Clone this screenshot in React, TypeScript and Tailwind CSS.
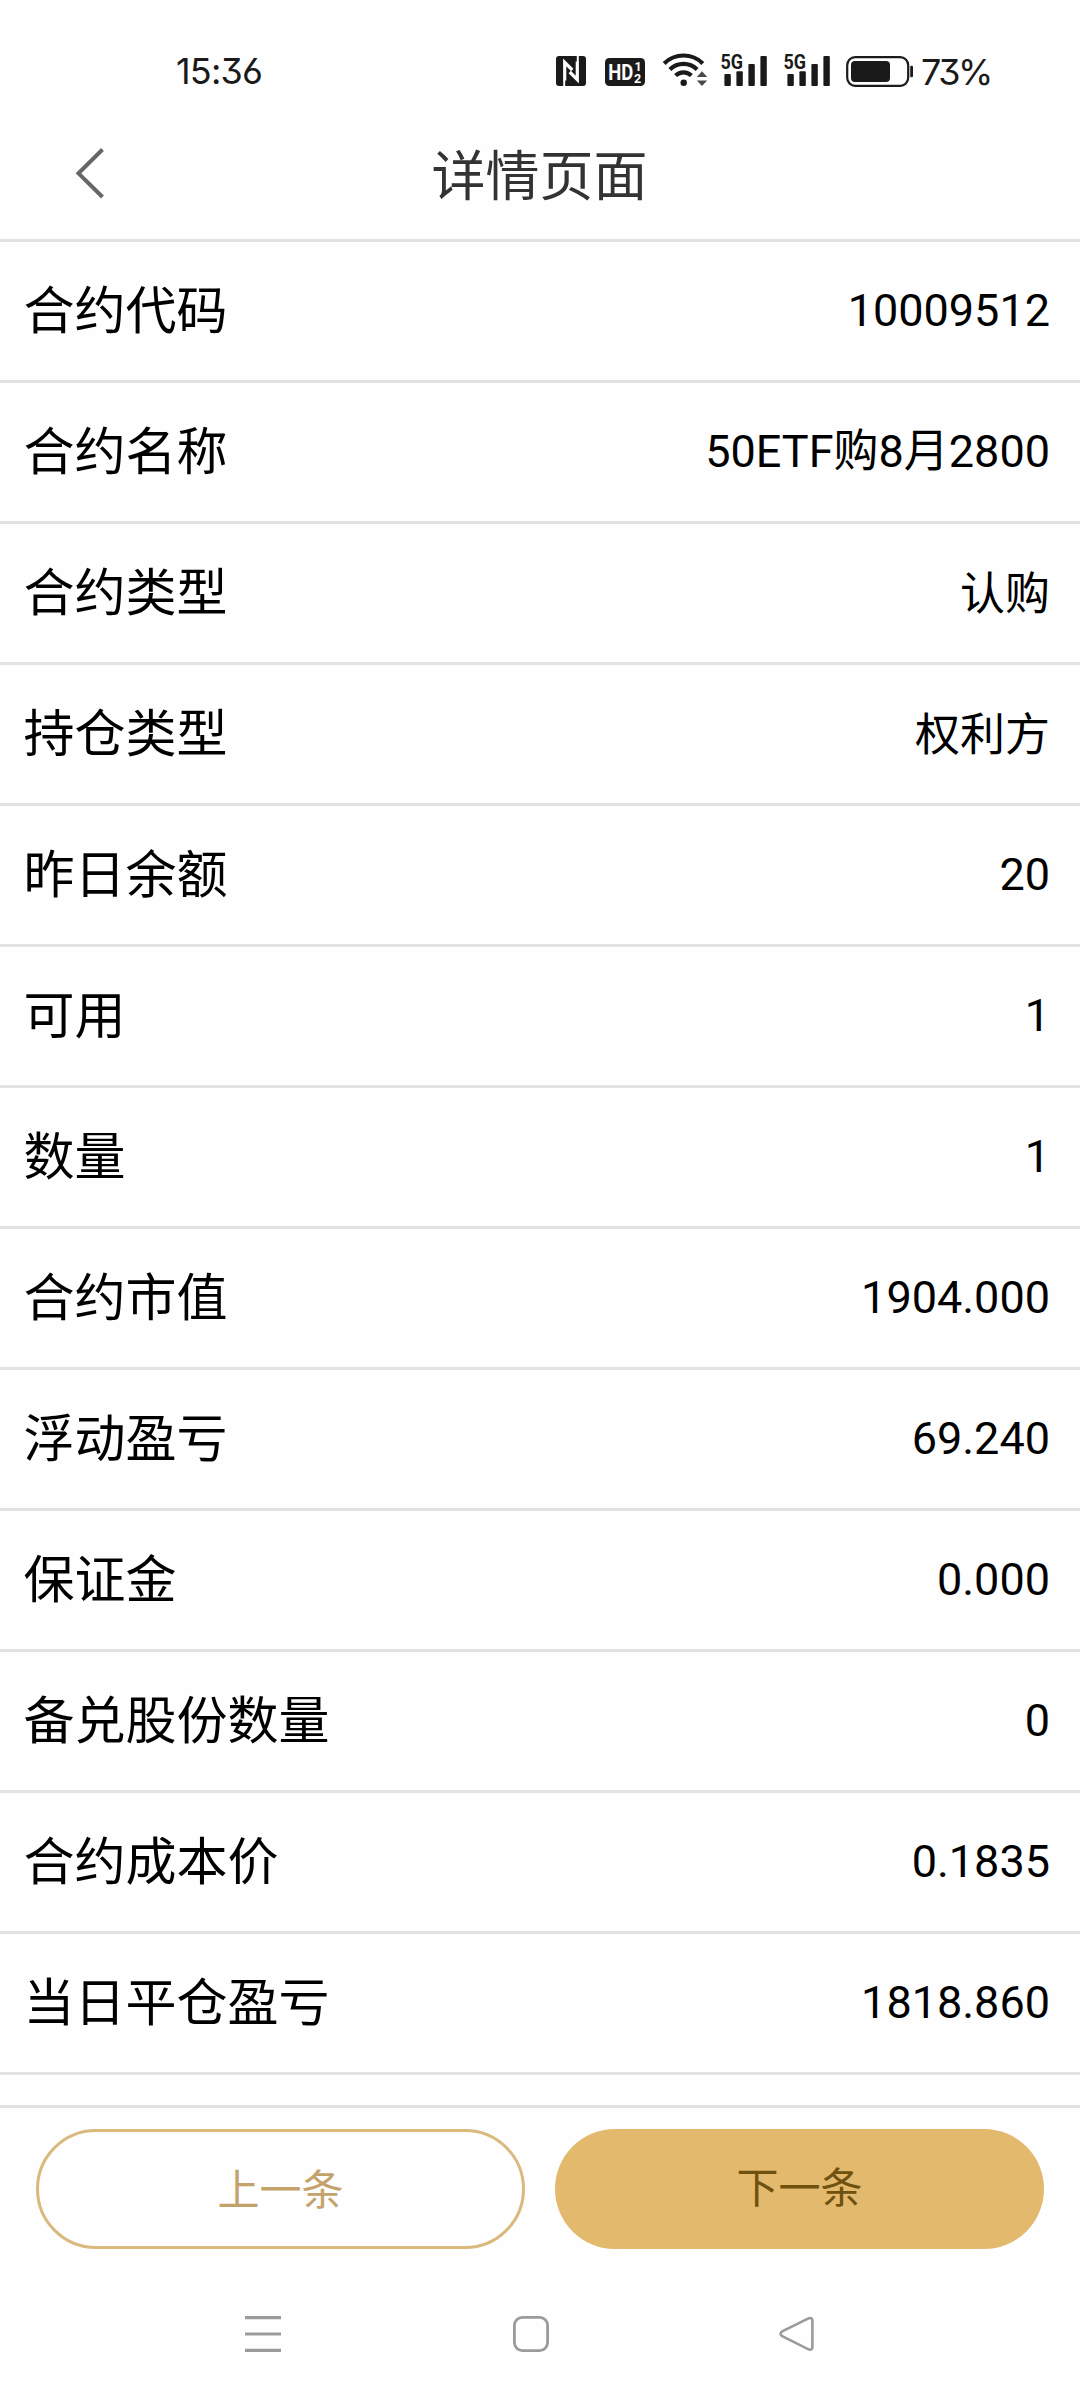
const rows: [string, string][] = [
  ['合约代码', '10009512'],
  ['合约名称', '50ETF购8月2800'],
  ['合约类型', '认购'],
  ['持仓类型', '权利方'],
  ['昨日余额', '20'],
  ['可用', '1'],
  ['数量', '1'],
  ['合约市值', '1904.000'],
  ['浮动盈亏', '69.240'],
  ['保证金', '0.000'],
  ['备兑股份数量', '0'],
  ['合约成本价', '0.1835'],
  ['当日平仓盈亏', '1818.860'],
];

function NfcIcon() {
  return (
    <svg width="30" height="30" viewBox="0 0 30 30" className="mb-px shrink-0">
      <rect width="30" height="30" rx="3" fill="#1a1a1a" />
      <path d="M8.7 24.5V6.4L16.3 14" fill="none" stroke="#fefefe" strokeWidth="3.2" />
      <path d="M21.3 5.5V23.6L13.7 16" fill="none" stroke="#fefefe" strokeWidth="3.2" />
      <path d="M8.2 24v6M21.8 0v6" stroke="#fefefe" strokeWidth="2" />
    </svg>
  );
}

function HdIcon() {
  return (
    <svg width="40" height="28" viewBox="0 0 40 28" className="mb-px ml-[19px] shrink-0">
      <rect width="40" height="28" rx="4.5" fill="#1a1a1a" />
      <text x="3.3" y="22" fontSize="22.5" fontWeight="700" fontFamily="Roboto, sans-serif" fill="#fefefe" textLength="25" lengthAdjust="spacingAndGlyphs">HD</text>
      <text x="29.4" y="13.2" fontSize="12.5" fontWeight="700" fontFamily="Roboto, sans-serif" fill="#fefefe">1</text>
      <text x="29" y="24.6" fontSize="12.5" fontWeight="700" fontFamily="Roboto, sans-serif" fill="#fefefe">2</text>
    </svg>
  );
}

function WifiIcon() {
  return (
    <svg width="46" height="36" viewBox="0 0 46 36" className="ml-[17px] shrink-0">
      <g fill="none" stroke="#1a1a1a" strokeWidth="4.2">
        <path d="M2.2 12.4A27.5 27.5 0 0 1 40.8 12.4" />
        <path d="M7.9 18.4A19.3 19.3 0 0 1 35.1 18.4" />
        <path d="M13.6 24.6A11.2 11.2 0 0 1 29.4 24.6" />
      </g>
      <circle cx="21.7" cy="31.7" r="3.2" fill="#1a1a1a" />
      <path d="M40 20.2l5.2 5.8H34.8zM40 35l5.2-5.6H34.8z" fill="#4a4a4a" />
    </svg>
  );
}

function SignalIcon() {
  return (
    <svg width="47" height="36" viewBox="0 -2 47 36" className="mb-px shrink-0 overflow-visible">
      <text x="-0.5" y="17.4" fontSize="20.5" fontWeight="700" fontFamily="Roboto, sans-serif" fill="#1a1a1a" textLength="22.5" lengthAdjust="spacingAndGlyphs">5G</text>
      <g fill="#1a1a1a">
        <rect x="3.4" y="22" width="6.4" height="12" rx="1" />
        <rect x="15.4" y="19.2" width="6.4" height="14.8" rx="1" />
        <rect x="27.4" y="12" width="6.4" height="22" rx="1" />
        <rect x="39.4" y="4" width="6.4" height="30" rx="1" />
      </g>
    </svg>
  );
}

function BatteryIcon() {
  return (
    <svg width="68" height="31" viewBox="0 0 68 31" className="ml-[15px] shrink-0">
      <rect x="1.2" y="1.2" width="61" height="28.6" rx="8" fill="none" stroke="#1a1a1a" strokeWidth="2.2" />
      <rect x="5" y="5" width="39" height="21" rx="4" fill="#1a1a1a" />
      <rect x="64.2" y="9.8" width="2.8" height="11.4" rx="1.2" fill="#1a1a1a" />
    </svg>
  );
}

export default function App() {
  return (
    <div className="flex h-[2400px] w-[1080px] flex-col overflow-hidden bg-[#fefefe] font-[Roboto,'Noto_Sans_CJK_SC',sans-serif] text-black">
      <div className="flex h-[94px] shrink-0 pl-[176px] text-[#1a1a1a]">
        <span className="mt-[49px] w-[380px] shrink-0 font-[Inter,sans-serif] text-[36px] leading-[44px] tracking-[-0.8px] [font-feature-settings:'cv03','cv09']">15:36</span>
        <div className="flex h-[87px] items-end">
          <NfcIcon />
          <HdIcon />
          <WifiIcon />
          <div className="ml-[13px] flex gap-[16px]">
            <SignalIcon />
            <SignalIcon />
          </div>
          <BatteryIcon />
          <span className="mb-[-7px] ml-[7px] font-[Inter,sans-serif] text-[36px] leading-[44px] tracking-[-2.6px] [font-feature-settings:'cv03','cv09']">73%</span>
        </div>
      </div>

      <header className="grid h-[148px] shrink-0 grid-cols-[1fr_auto_1fr] items-center border-b-[3px] border-[#e1e1e1]">
        <svg width="32" height="52" viewBox="0 0 32 52" className="mt-[13px] ml-[74px]">
          <path d="M28.5 2.5L4.5 26.3L28.5 50" fill="none" stroke="#666" strokeWidth="4" />
        </svg>
        <h1 className="mt-[23px] -ml-px text-[54px] leading-[80px] text-[#333]">详情页面</h1>
      </header>

      <main className="flex h-[1863px] shrink-0 flex-col">
        {rows.map(([label, value]) => (
          <div key={label} className="flex h-[141px] shrink-0 items-center justify-between border-b-[3px] border-[#e3e3e3] pr-[30px] pl-[24px]">
            <span className="-ml-[0.5px] pt-[2px] text-[51px] leading-[76px]">{label}</span>
            <span className={/[0-9]/.test(value) ? 'text-[45px] leading-[68px]' : 'pt-[3px] text-[45px] leading-[68px]'}>{value}</span>
          </div>
        ))}
      </main>

      <footer className="grid h-[166px] shrink-0 grid-cols-2 items-start gap-[30px] border-t-[3px] border-[#e3e3e3] px-[36px] pt-[21px] text-[42px]">
        <button className="h-[120px] rounded-full border-[3px] border-[#d9b97d] pt-[3px] text-[#c4a36b]">上一条</button>
        <button className="h-[120px] rounded-full bg-[#e3b96d] pb-px text-[#6f5110]">下一条</button>
      </footer>

      <nav className="flex h-[127px] shrink-0 items-center justify-between pr-[265px] pb-px pl-[245px]">
        <svg width="36" height="36" viewBox="0 0 36 36">
          <path d="M0 1.6h36M0 18h36M0 34.4h36" stroke="#9b9b9b" strokeWidth="3.2" />
        </svg>
        <svg width="36" height="36" viewBox="0 0 36 36" className="ml-[2px]">
          <rect x="1.4" y="1.4" width="33.2" height="33.2" rx="8" fill="none" stroke="#9b9b9b" strokeWidth="2.8" />
        </svg>
        <svg width="36" height="36" viewBox="0 0 36 36">
          <path d="M29.5 2.3L3.2 15.4Q-.2 17.8 3.2 20.2L29.5 33.3Q33.4 34.5 33.4 31V4.6Q33.4 1.1 29.5 2.3Z" fill="none" stroke="#9b9b9b" strokeWidth="2.6" />
        </svg>
      </nav>
    </div>
  );
}
